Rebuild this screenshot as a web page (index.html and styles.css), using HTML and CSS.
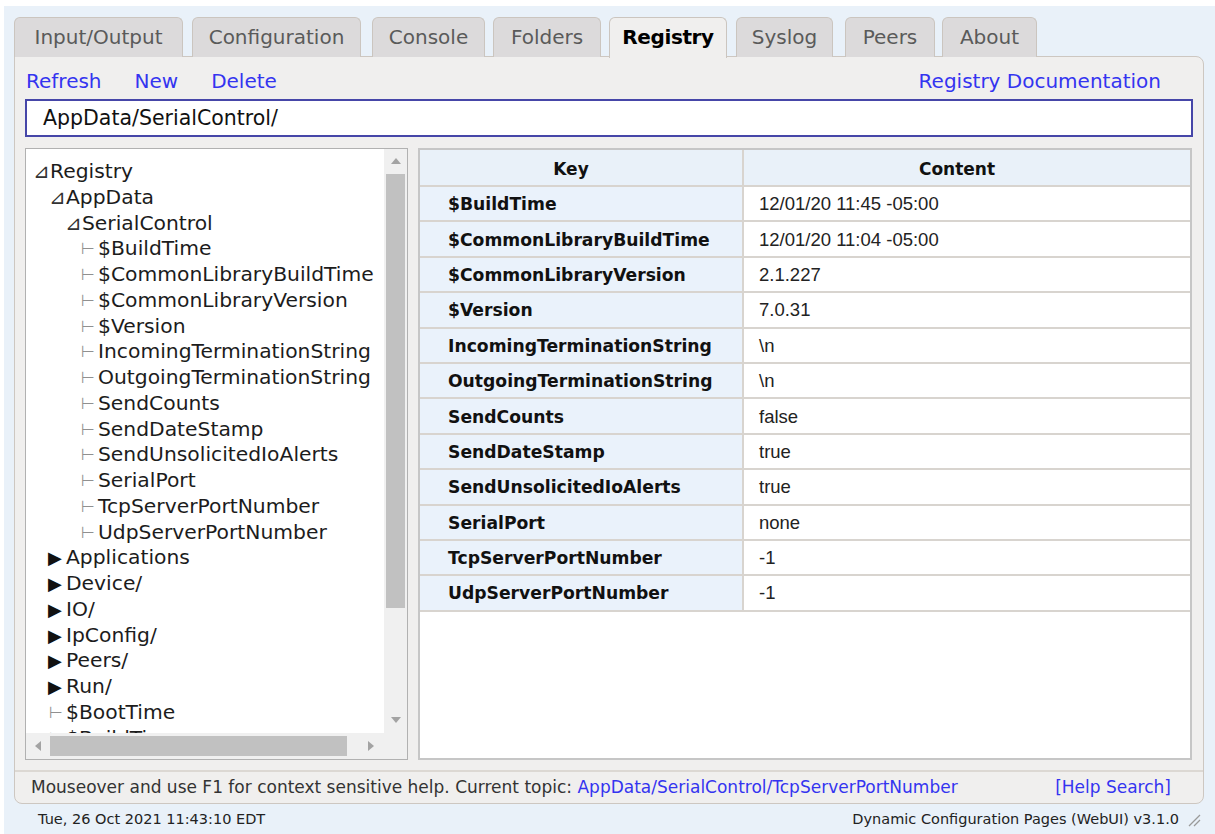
FILE: index.html
```html
<!DOCTYPE html>
<html lang="en">
<head>
<meta charset="utf-8">
<title>Registry</title>
<link rel="stylesheet" href="styles.css">
</head>
<body>
<div class="page">
  <nav class="tabs">
    <a class="tab">Input/Output</a>
    <a class="tab">Configuration</a>
    <a class="tab">Console</a>
    <a class="tab">Folders</a>
    <a class="tab active">Registry</a>
    <a class="tab">Syslog</a>
    <a class="tab">Peers</a>
    <a class="tab">About</a>
  </nav>

  <section class="panel">
    <div class="toolbar">
      <a class="link">Refresh</a>
      <a class="link">New</a>
      <a class="link">Delete</a>
      <a class="link doc">Registry Documentation</a>
    </div>

    <div class="path">AppData/SerialControl/</div>

    <div class="workspace">
      <div class="tree-box">
        <div class="tree-view">
          <div class="node l0"><span class="twisty open">&#x22BF;</span>Registry</div>
          <div class="node l1"><span class="twisty open">&#x22BF;</span>AppData</div>
          <div class="node l2"><span class="twisty open">&#x22BF;</span>SerialControl</div>
          <div class="node l3"><span class="twisty leaf">&#x22A2;</span>$BuildTime</div>
          <div class="node l3"><span class="twisty leaf">&#x22A2;</span>$CommonLibraryBuildTime</div>
          <div class="node l3"><span class="twisty leaf">&#x22A2;</span>$CommonLibraryVersion</div>
          <div class="node l3"><span class="twisty leaf">&#x22A2;</span>$Version</div>
          <div class="node l3"><span class="twisty leaf">&#x22A2;</span>IncomingTerminationString</div>
          <div class="node l3"><span class="twisty leaf">&#x22A2;</span>OutgoingTerminationString</div>
          <div class="node l3"><span class="twisty leaf">&#x22A2;</span>SendCounts</div>
          <div class="node l3"><span class="twisty leaf">&#x22A2;</span>SendDateStamp</div>
          <div class="node l3"><span class="twisty leaf">&#x22A2;</span>SendUnsolicitedIoAlerts</div>
          <div class="node l3"><span class="twisty leaf">&#x22A2;</span>SerialPort</div>
          <div class="node l3"><span class="twisty leaf">&#x22A2;</span>TcpServerPortNumber</div>
          <div class="node l3"><span class="twisty leaf">&#x22A2;</span>UdpServerPortNumber</div>
          <div class="node l1"><span class="twisty closed">&#x25B6;</span>Applications</div>
          <div class="node l1"><span class="twisty closed">&#x25B6;</span>Device/</div>
          <div class="node l1"><span class="twisty closed">&#x25B6;</span>IO/</div>
          <div class="node l1"><span class="twisty closed">&#x25B6;</span>IpConfig/</div>
          <div class="node l1"><span class="twisty closed">&#x25B6;</span>Peers/</div>
          <div class="node l1"><span class="twisty closed">&#x25B6;</span>Run/</div>
          <div class="node l1"><span class="twisty leaf">&#x22A2;</span>$BootTime</div>
          <div class="node l1"><span class="twisty leaf">&#x22A2;</span>$BuildTime</div>
        </div>
        <div class="vscroll">
          <span class="arrow up"></span>
          <span class="vthumb"></span>
          <span class="fill"></span>
          <span class="arrow down"></span>
        </div>
        <div class="hscroll">
          <span class="arrow left"></span>
          <span class="hthumb"></span>
          <span class="fill"></span>
          <span class="arrow right"></span>
        </div>
        <div class="corner"></div>
      </div>

      <div class="table-box">
        <table class="grid">
          <thead>
            <tr><th class="key-col">Key</th><th>Content</th></tr>
          </thead>
          <tbody>
            <tr><td class="key">$BuildTime</td><td>12/01/20 11:45 -05:00</td></tr>
            <tr><td class="key">$CommonLibraryBuildTime</td><td>12/01/20 11:04 -05:00</td></tr>
            <tr><td class="key">$CommonLibraryVersion</td><td>2.1.227</td></tr>
            <tr><td class="key">$Version</td><td>7.0.31</td></tr>
            <tr><td class="key">IncomingTerminationString</td><td>\n</td></tr>
            <tr><td class="key">OutgoingTerminationString</td><td>\n</td></tr>
            <tr><td class="key">SendCounts</td><td>false</td></tr>
            <tr><td class="key">SendDateStamp</td><td>true</td></tr>
            <tr><td class="key">SendUnsolicitedIoAlerts</td><td>true</td></tr>
            <tr><td class="key">SerialPort</td><td>none</td></tr>
            <tr><td class="key">TcpServerPortNumber</td><td>-1</td></tr>
            <tr><td class="key">UdpServerPortNumber</td><td>-1</td></tr>
          </tbody>
        </table>
      </div>
    </div>

    <div class="helpbar">
      <span class="help-text">Mouseover and use F1 for context sensitive help. Current topic: <a class="link">AppData/SerialControl/TcpServerPortNumber</a></span>
      <a class="link">[Help Search]</a>
    </div>
  </section>

  <footer class="status">
    <span>Tue, 26 Oct 2021 11:43:10 EDT</span>
    <span class="version">Dynamic Configuration Pages (WebUI) v3.1.0
      <svg class="grip" width="14" height="14" viewBox="0 0 14 14"><path d="M2 13 L13 2 M7 13 L13 7" stroke="#9a9a9a" stroke-width="1.3" fill="none"/></svg>
    </span>
  </footer>
</div>
</body>
</html>
```

FILE: styles.css
```css
* { box-sizing: border-box; }

html, body {
  margin: 0;
  padding: 0;
  background: #ffffff;
}

body {
  font-family: "DejaVu Sans", Verdana, sans-serif;
  color: #222;
}

.page {
  margin: 6px 0 0 4px;
  height: 828px;
  background: #e9f1f9;
  padding: 11px 12px 0 10px;
  display: flex;
  flex-direction: column;
}

/* ---------- tabs ---------- */
.tabs {
  display: flex;
  height: 39px;
  position: relative;
  z-index: 1;
}

.tab {
  height: 40px;
  margin-right: 9px;
  font-size: 20px;
  line-height: 38px;
  text-align: center;
  color: #5a5a5a;
  background: #dcdadb;
  border: 1px solid #cbc5bf;
  border-bottom: none;
  border-radius: 6px 6px 0 0;
}

.tab:nth-child(1) { width: 169px; }
.tab:nth-child(2) { width: 169px; margin-right: 11px; }
.tab:nth-child(3) { width: 113px; margin-right: 8px; }
.tab:nth-child(4) { width: 108px; margin-right: 8px; }
.tab:nth-child(5) { width: 118px; }
.tab:nth-child(6) { width: 97px; margin-right: 12px; }
.tab:nth-child(7) { width: 90px; margin-right: 7px; }
.tab:nth-child(8) { width: 95px; }

.tab.active {
  color: #000;
  font-weight: bold;
  letter-spacing: -0.4px;
  background: #f0efee;
  height: 41px;
}

/* ---------- main panel ---------- */
.panel {
  width: 1190px;
  height: 748px;
  background: #f0efee;
  border: 1px solid #cdc7c1;
  border-radius: 0 8px 8px 8px;
  padding: 0 10px;
  display: flex;
  flex-direction: column;
}

.link {
  color: #3434f0;
  text-decoration: none;
}

.toolbar {
  display: flex;
  font-size: 20px;
  line-height: 24px;
  padding: 12px 0 6px 1px;
}

.toolbar .link { margin-right: 33px; }
.toolbar .doc { margin-left: auto; margin-right: 32px; }

.path {
  height: 38px;
  background: #fff;
  border: 2px solid #4646a8;
  font-size: 20.5px;
  line-height: 34px;
  padding-left: 16px;
  color: #111;
}

.workspace {
  display: flex;
  gap: 10px;
  margin-top: 11px;
  height: 612px;
}

/* ---------- tree ---------- */
.tree-box {
  width: 383px;
  height: 612px;
  border: 1px solid #b1b1b1;
  background: #fff;
  display: grid;
  grid-template-columns: 1fr 23px;
  grid-template-rows: 1fr 26px;
  overflow: hidden;
}

.tree-view {
  overflow: hidden;
  padding-top: 10px;
  font-size: 20.3px;
  line-height: 25.75px;
  color: #1c1c1c;
  white-space: nowrap;
}

.node { padding-left: 7px; }
.node.l1 { padding-left: 23px; }
.node.l2 { padding-left: 39px; }
.node.l3 { padding-left: 55px; }

.twisty {
  display: inline-block;
  width: 17px;
  text-align: left;
  vertical-align: top;
  line-height: 25.75px;
}

.twisty.open { font-size: 20px; color: #333; }
.twisty.closed { font-size: 18px; color: #111; margin-left: -1px; margin-right: 1px; }
.twisty.leaf { font-size: 16px; color: #909090; }

.vscroll {
  background: #f0f0f0;
  display: flex;
  flex-direction: column;
  align-items: center;
}

.vthumb {
  width: 19px;
  height: 434px;
  background: #c1c1c1;
}

.fill { flex: 1; }

.hscroll {
  background: #f0f0f0;
  display: flex;
  align-items: center;
}

.hthumb {
  width: 297px;
  height: 20px;
  background: #c1c1c1;
}

.corner { background: #f0f0f0; }

.arrow {
  display: block;
  width: 0;
  height: 0;
  border: 5px solid transparent;
}

.arrow.up { margin: 9px 0 10px; border-bottom: 6px solid #a3a3a3; border-top: none; }
.arrow.down { margin: 8px 0 10px; border-top: 6px solid #a3a3a3; border-bottom: none; }
.arrow.left { margin: 0 9px 0 9px; border-right: 6px solid #a3a3a3; border-left: none; }
.arrow.right { margin: 0 10px 0 10px; border-left: 6px solid #a3a3a3; border-right: none; }

/* ---------- key / content table ---------- */
.table-box {
  width: 774px;
  height: 612px;
  border: 2px solid #c6c6c6;
  background: #fff;
}

.grid {
  width: 100%;
  border-collapse: separate;
  border-spacing: 0;
  table-layout: fixed;
}

.grid th, .grid td {
  height: 35.4px;
  border-bottom: 2px solid #d8d4cf;
  padding: 0;
}

.grid th {
  height: 37px;
  padding: 2px 20px 0 0;
  background: #e9f1f9;
  font-size: 17px;
  font-weight: bold;
  color: #111;
  text-align: center;
}

.grid .key-col { width: 324px; }

.grid th.key-col,
.grid td.key {
  border-right: 2px solid #d8d4cf;
}

.grid td {
  font-family: "Liberation Sans", Arial, sans-serif;
  font-size: 18.5px;
  color: #222;
  padding: 1px 0 0 15px;
}

.grid td.key {
  font-family: "DejaVu Sans", Verdana, sans-serif;
  background: #eaf2fb;
  font-size: 17.2px;
  font-weight: bold;
  color: #111;
  padding-left: 28px;
}

/* ---------- help bar ---------- */
.helpbar {
  margin: 10px -10px 0;
  border-top: 2px solid #dcd8d3;
  flex: 1;
  display: flex;
  align-items: center;
  padding: 0 32px 2px 16px;
  font-size: 17px;
  color: #333;
}

.help-text { flex: 1; }

/* ---------- status line ---------- */
.status {
  display: flex;
  justify-content: space-between;
  align-items: center;
  height: 29px;
  padding: 0 2px 0 24px;
  font-size: 14.5px;
  color: #222;
}

.version {
  display: flex;
  align-items: center;
  gap: 8px;
}

.grip { margin-top: 2px; }
```
